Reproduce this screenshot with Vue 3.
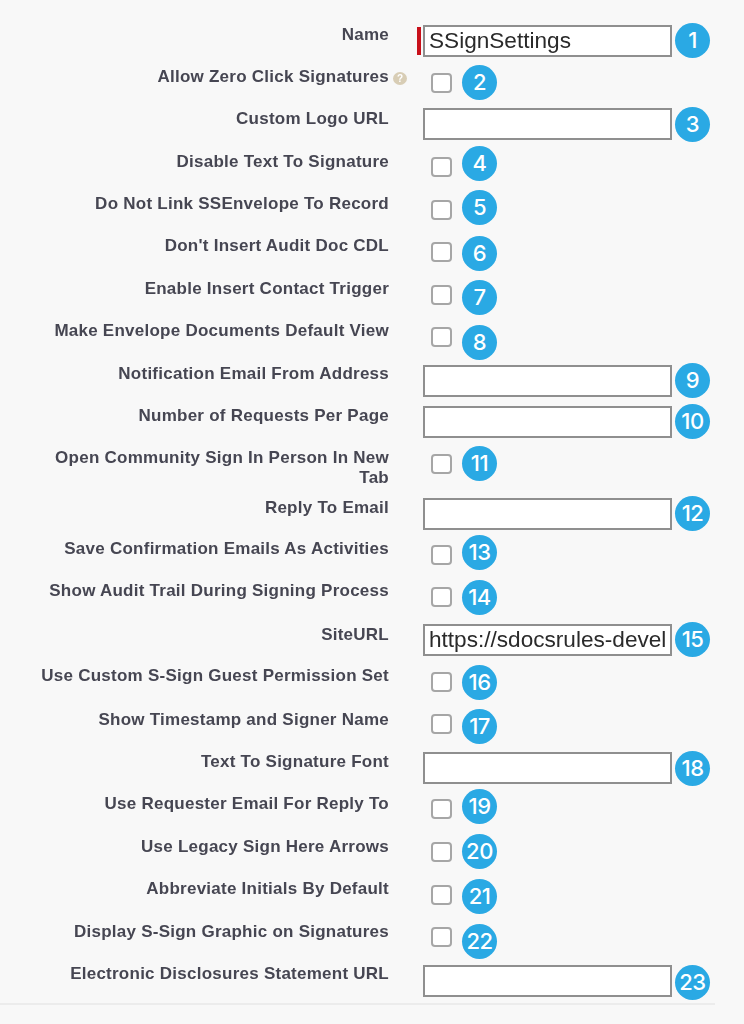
<template>
  <div class="settings-page">
    <div class="settings-list">
      <div
        v-for="(row, index) in layoutRows"
        :key="row.label"
        class="setting-row"
        :style="{ height: row.height + 'px' }"
      >
        <div class="setting-label">
          {{ row.label }}
          <span v-if="row.help" class="help-icon">?</span>
        </div>
        <div class="setting-field" :class="{ 'is-required': row.required }">
          <input
            v-if="row.type === 'text'"
            class="text-input"
            :style="{ marginTop: row.controlTop + 'px' }"
            type="text"
            :value="row.value"
            readonly
          />
          <input
            v-else
            class="check-input"
            :style="{ marginTop: row.controlTop + 'px' }"
            type="checkbox"
          />
          <span class="step-badge" :style="{ marginTop: row.badgeTop + 'px' }">{{ index + 1 }}</span>
        </div>
      </div>
    </div>
    <div class="bottom-line"></div>
  </div>
</template>

<script setup>
  import { computed } from 'vue';

  // y = label centre, c = control centre, b = badge centre (page coordinates)
  const rows = [
    { label: 'Name', type: 'text', required: true, value: 'SSignSettings', y: 34, c: 41, b: 40 },
    { label: 'Allow Zero Click Signatures', type: 'check', help: true, y: 76, c: 83, b: 82 },
    { label: 'Custom Logo URL', type: 'text', y: 118, c: 124, b: 124 },
    { label: 'Disable Text To Signature', type: 'check', y: 161, c: 167, b: 163 },
    { label: 'Do Not Link SSEnvelope To Record', type: 'check', y: 203, c: 210, b: 207 },
    { label: "Don't Insert Audit Doc CDL", type: 'check', y: 245, c: 252, b: 253 },
    { label: 'Enable Insert Contact Trigger', type: 'check', y: 288, c: 295, b: 297 },
    { label: 'Make Envelope Documents Default View', type: 'check', y: 330, c: 337, b: 342 },
    { label: 'Notification Email From Address', type: 'text', y: 373, c: 381, b: 380 },
    { label: 'Number of Requests Per Page', type: 'text', y: 415, c: 422, b: 421 },
    { label: 'Open Community Sign In Person In New Tab', type: 'check', y: 457, c: 464, b: 463 },
    { label: 'Reply To Email', type: 'text', y: 507, c: 514, b: 513 },
    { label: 'Save Confirmation Emails As Activities', type: 'check', y: 548, c: 555, b: 552 },
    { label: 'Show Audit Trail During Signing Process', type: 'check', y: 590, c: 597, b: 597 },
    { label: 'SiteURL', type: 'text', value: 'https://sdocsrules-devel', y: 634, c: 640, b: 639 },
    { label: 'Use Custom S-Sign Guest Permission Set', type: 'check', y: 675, c: 682, b: 682 },
    { label: 'Show Timestamp and Signer Name', type: 'check', y: 719, c: 724, b: 726 },
    { label: 'Text To Signature Font', type: 'text', y: 761, c: 768, b: 768 },
    { label: 'Use Requester Email For Reply To', type: 'check', y: 803, c: 809, b: 806 },
    { label: 'Use Legacy Sign Here Arrows', type: 'check', y: 846, c: 852, b: 851 },
    { label: 'Abbreviate Initials By Default', type: 'check', y: 888, c: 895, b: 896 },
    { label: 'Display S-Sign Graphic on Signatures', type: 'check', y: 931, c: 937, b: 941 },
    { label: 'Electronic Disclosures Statement URL', type: 'text', y: 973, c: 981, b: 982 }
  ];

  const layoutRows = computed(() => {
    return rows.map((row, i) => {
      const top = row.y - 14;
      const next = rows[i + 1] ? rows[i + 1].y - 14 : 1003;
      const controlSize = row.type === 'text' ? 32 : 20;
      return {
        ...row,
        height: next - top,
        controlTop: row.c - controlSize / 2 - top,
        badgeTop: row.b - 17.5 - top
      };
    });
  });
</script>

<style scoped>
  .settings-page {
    width: 744px;
    height: 1024px;
    background: #f8f8f8;
    overflow: hidden;
    box-sizing: border-box;
    padding-top: 20px;
    font-family: "Liberation Sans", Arial, sans-serif;
  }

  .setting-row {
    display: flex;
    align-items: flex-start;
  }

  /* --- Label column --- */
  .setting-label {
    position: relative;
    box-sizing: border-box;
    width: 389px;
    padding: 5px 0 0 39px;
    flex-shrink: 0;
    text-align: right;
    font-size: 17px;
    font-weight: 700;
    letter-spacing: 0.25px;
    line-height: 20px;
    color: #464652;
    filter: blur(0.5px);
  }

  .help-icon {
    position: absolute;
    left: 393px;
    top: 10px;
    width: 14px;
    height: 13px;
    border-radius: 50%;
    background: #d8cdb5;
    color: #fff;
    font-size: 10px;
    letter-spacing: 0;
    line-height: 13px;
    text-align: center;
  }

  /* --- Controls --- */
  .setting-field {
    position: relative;
    display: flex;
    align-items: flex-start;
    margin-left: 34px;
  }

  /* Required marker */
  .is-required::before {
    content: "";
    position: absolute;
    left: -6px;
    top: 7px;
    width: 4px;
    height: 28px;
    background: #c8101a;
  }

  .text-input {
    box-sizing: border-box;
    display: block;
    width: 249px;
    height: 32px;
    margin: 0;
    padding: 0 0 0 4px;
    border: 2px solid #8f8f8f;
    border-radius: 0;
    outline: none;
    background: #fff;
    font-family: inherit;
    font-size: 22.6px;
    color: #2a2a2a;
    flex-shrink: 0;
    filter: blur(0.4px);
  }

  .check-input {
    appearance: none;
    box-sizing: border-box;
    display: block;
    width: 21px;
    height: 20px;
    margin: 0 10px 0 8px;
    border: 2px solid #a6a6a6;
    border-radius: 4px;
    background: #fff;
    flex-shrink: 0;
    filter: blur(0.5px);
  }

  .text-input + .step-badge {
    margin-left: 3px;
  }

  .step-badge {
    width: 35px;
    height: 35px;
    border-radius: 50%;
    background: #2aa9e4;
    color: #fff;
    display: flex;
    align-items: center;
    justify-content: center;
    font-family: Inter, "Open Sans", sans-serif;
    font-size: 22px;
    font-weight: 500;
    letter-spacing: -0.5px;
    flex-shrink: 0;
  }

  .bottom-line {
    width: 715px;
    height: 2px;
    background: #ececec;
  }
</style>
